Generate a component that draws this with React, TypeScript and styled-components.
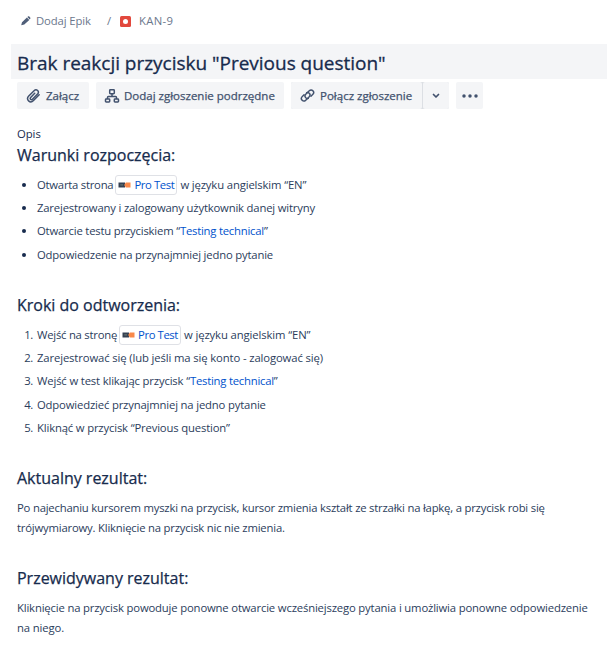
import React from "react";
import styled, { createGlobalStyle } from "styled-components";

const GlobalStyle = createGlobalStyle`
  * { box-sizing: border-box; }
  body {
    margin: 0;
    background: #fff;
    color: #172b4d;
    font: 11.3px/20px "Open Sans", "Noto Sans", sans-serif;
    overflow: hidden;
  }
`;

const Page = styled.main`
  height: 648px;
  overflow: hidden;
`;

const Text = styled.span<{ $track?: number }>`
  letter-spacing: ${(p) => p.$track ?? 0}px;
  white-space: pre;
`;

const Breadcrumbs = styled.nav`
  display: flex;
  align-items: center;
  height: 20px;
  margin: 11px 0 13px 20px;
  color: #6b778c;
`;

const Crumb = styled.div`
  display: flex;
  align-items: center;
`;

const EpicCrumb = styled(Crumb)`
  width: 87px;
  gap: 4px;
`;

const IssueCrumb = styled(Crumb)`
  gap: 8px;
`;

const Slash = styled.span`
  width: 13px;
`;

const BugIcon = styled.span`
  display: grid;
  place-items: center;
  width: 11px;
  height: 11px;
  border-radius: 1.5px;
  background: #e2483d;

  &::after {
    content: "";
    width: 5px;
    height: 5px;
    border-radius: 50%;
    background: #fff;
  }
`;

const Title = styled.h1`
  height: 35px;
  margin: 0 0 3px 11px;
  padding-left: 6px;
  background: #f4f5f7;
  font-size: 19px;
  font-weight: 500;
  line-height: 38px;
  letter-spacing: -0.02px;
  -webkit-text-stroke: 0.3px currentColor;
  white-space: nowrap;
`;

const Toolbar = styled.div`
  display: flex;
  margin-left: 17px;
  gap: 7px;
`;

const Button = styled.button<{ $width: number }>`
  display: flex;
  align-items: center;
  width: ${(p) => p.$width}px;
  height: 27px;
  padding: 0 0 0 8px;
  gap: 4px;
  border: 0;
  border-radius: 2px;
  background: #f4f5f7;
  color: #42526e;
  font: 500 11.5px/27px "Open Sans", "Noto Sans", sans-serif;
  letter-spacing: 0;
  -webkit-text-stroke: 0.25px currentColor;
  white-space: nowrap;
`;

const IconButton = styled(Button)`
  justify-content: center;
  padding: 0;
`;

const SplitButton = styled.div`
  display: flex;
  gap: 1px;
  border-radius: 2px;
  background: #dcdfe4;
`;

const Description = styled.section`
  margin: 15px 17px 0;
`;

const Label = styled.div`
  height: 18px;
  line-height: 19px;
  letter-spacing: -0.05px;
`;

const Block = styled.section<{ $height: number }>`
  height: ${(p) => p.$height}px;
`;

const Heading = styled.h2<{ $gap: number }>`
  height: 26px;
  margin: 0 0 ${(p) => p.$gap}px;
  font-size: 16px;
  font-weight: 500;
  line-height: 26px;
  letter-spacing: -0.01px;
  -webkit-text-stroke: 0.25px currentColor;
`;

const List = styled.div`
  display: grid;
  grid-auto-rows: 23.33px;
  color: #2b3d5c;
`;

const Item = styled.div`
  display: grid;
  grid-template-columns: 16px 1fr;
  column-gap: 4px;
  align-items: center;
`;

const Marker = styled.span`
  text-align: right;
  letter-spacing: -0.3px;
`;

const Bullet = styled.span`
  width: 4px;
  height: 4px;
  margin-left: 5px;
  border-radius: 50%;
  background: #172b4d;
`;

const ItemBody = styled.div`
  display: flex;
  align-items: center;
`;

const Link = styled.a`
  color: #0052cc;
  letter-spacing: -0.23px;
  white-space: nowrap;
`;

const SmartLink = styled.a`
  display: flex;
  align-items: center;
  width: 62px;
  height: 20px;
  margin: 0 3px 0 2px;
  padding-left: 2px;
  gap: 3px;
  border: 1px solid #dfe1e6;
  border-radius: 3px;
  color: #0052cc;
  letter-spacing: -0.39px;
  white-space: nowrap;
`;

const Paragraph = styled.p`
  display: flex;
  flex-direction: column;
  margin: 0;
  color: #2b3d5c;
`;

const PencilIcon = () => (
  <svg width="12" height="12" viewBox="0 0 12 12" fill="#505f79">
    <path d="M1.2 10.3 2 7.3l4.9-4.7 2.4 2.3L4.3 9.6ZM7.4 2.1l.6-.5c.4-.4.9-.4 1.3 0l.9.9c.4.4.4.9 0 1.3l-.5.6Z" />
  </svg>
);

const ClipIcon = () => (
  <svg width="17" height="17" viewBox="0 0 24 24" fill="none" stroke="currentColor" strokeWidth="2.1" strokeLinecap="round">
    <path d="m20 11-8 8.2c-2.1 2.1-5 2.2-6.9.4-1.9-1.9-1.8-4.7.2-6.8l7.5-7.6c1.5-1.5 3.6-1.6 5-.3 1.4 1.4 1.3 3.5-.1 5l-7.2 7.3c-.8.8-1.9.8-2.6.1-.7-.7-.6-1.8.1-2.6l5.7-5.8" />
  </svg>
);

const TreeIcon = () => (
  <svg width="16" height="16" viewBox="0 0 16 16" fill="none" stroke="currentColor" strokeWidth="1.5">
    <rect x="5.7" y="1.7" width="4.6" height="4" rx=".7" />
    <path d="M8 5.7v2.8M3.5 11V9.4q0-.9.9-.9h7.2q.9 0 .9.9V11" />
    <rect x="1.5" y="11.1" width="4.2" height="2.8" rx=".7" />
    <rect x="10.3" y="11.1" width="4.2" height="2.8" rx=".7" />
  </svg>
);

const LinkIcon = () => (
  <svg width="17" height="17" viewBox="0 0 24 24" fill="none" stroke="currentColor" strokeWidth="2" strokeLinecap="round">
    <path d="M13.2 15.9c-1.3.6-2.7.3-3.7-.7-1.4-1.4-1.4-3.5 0-4.9l5-4.9c1.5-1.5 3.7-1.5 5.1-.1 1.4 1.4 1.4 3.6 0 5.1l-2.7 2.7" />
    <path d="M10.8 8.1c1.3-.6 2.7-.3 3.7.7 1.4 1.4 1.4 3.5 0 4.9l-5 4.9c-1.5 1.5-3.7 1.5-5.1.1-1.4-1.4-1.4-3.6 0-5.1l2.7-2.7" />
  </svg>
);

const ChevronIcon = () => (
  <svg width="8" height="6" viewBox="0 0 8 6" fill="none" stroke="currentColor" strokeWidth="1.7" strokeLinecap="round" strokeLinejoin="round">
    <path d="M1.5 1.5 4 4l2.5-2.5" />
  </svg>
);

const MoreIcon = () => (
  <svg width="16" height="4" viewBox="0 0 16 4" fill="currentColor">
    <circle cx="2" cy="2" r="1.75" />
    <circle cx="8" cy="2" r="1.75" />
    <circle cx="14" cy="2" r="1.75" />
  </svg>
);

const SiteIcon = () => (
  <svg width="13" height="8" viewBox="0 0 13 8">
    <path d="M.5 1.5H7v5H.5Z" fill="#344052" />
    <path d="M2.3 3.4h2.8v1H2.3Z" fill="#708078" />
    <path d="m6.2 4 1.6-2.5h4.7v5H7.8Z" fill="#f9894a" />
  </svg>
);

const ProTest = () => (
  <SmartLink>
    <SiteIcon />
    Pro Test
  </SmartLink>
);

const preconditions = [
  <>
    <Text $track={-0.24}>Otwarta strona</Text>
    <ProTest />
    <Text $track={-0.14}>w języku angielskim “EN”</Text>
  </>,
  <Text $track={-0.185}>Zarejestrowany i zalogowany użytkownik danej witryny</Text>,
  <>
    <Text $track={-0.19}>Otwarcie testu przyciskiem “</Text>
    <Link>Testing technical</Link>
    <Text>”</Text>
  </>,
  <Text $track={-0.18}>Odpowiedzenie na przynajmniej jedno pytanie</Text>,
];

const steps = [
  <>
    <Text $track={-0.24}>Wejść na stronę</Text>
    <ProTest />
    <Text $track={-0.12}>w języku angielskim “EN”</Text>
  </>,
  <Text $track={-0.13}>Zarejestrować się (lub jeśli ma się konto - zalogować się)</Text>,
  <>
    <Text $track={-0.16}>Wejść w test klikając przycisk “</Text>
    <Link>Testing technical</Link>
    <Text>”</Text>
  </>,
  <Text $track={-0.17}>Odpowiedzieć przynajmniej na jedno pytanie</Text>,
  <Text $track={-0.165}>Kliknąć w przycisk “Previous question”</Text>,
];

export default function App() {
  return (
    <Page>
      <GlobalStyle />
      <Breadcrumbs>
        <EpicCrumb>
          <PencilIcon />
          <Text $track={-0.1}>Dodaj Epik</Text>
        </EpicCrumb>
        <Slash>/</Slash>
        <IssueCrumb>
          <BugIcon />
          <Text $track={0.3}>KAN-9</Text>
        </IssueCrumb>
      </Breadcrumbs>
      <Title>Brak reakcji przycisku "Previous question"</Title>
      <Toolbar>
        <Button $width={72}>
          <ClipIcon />
          Załącz
        </Button>
        <Button $width={188}>
          <TreeIcon />
          Dodaj zgłoszenie podrzędne
        </Button>
        <SplitButton>
          <Button $width={131}>
            <LinkIcon />
            Połącz zgłoszenie
          </Button>
          <IconButton $width={26}>
            <ChevronIcon />
          </IconButton>
        </SplitButton>
        <IconButton $width={27}>
          <MoreIcon />
        </IconButton>
      </Toolbar>
      <Description>
        <Label>Opis</Label>
        <Block $height={150}>
          <Heading $gap={5}>Warunki rozpoczęcia:</Heading>
          <List>
            {preconditions.map((body, i) => (
              <Item key={i}>
                <Bullet />
                <ItemBody>{body}</ItemBody>
              </Item>
            ))}
          </List>
        </Block>
        <Block $height={173}>
          <Heading $gap={5}>Kroki do odtworzenia:</Heading>
          <List>
            {steps.map((body, i) => (
              <Item key={i}>
                <Marker>{i + 1}.</Marker>
                <ItemBody>{body}</ItemBody>
              </Item>
            ))}
          </List>
        </Block>
        <Block $height={100}>
          <Heading $gap={7}>Aktualny rezultat:</Heading>
          <Paragraph>
            <Text $track={-0.205}>
              Po najechaniu kursorem myszki na przycisk, kursor zmienia kształt ze strzałki na łapkę, a przycisk robi się
            </Text>
            <Text $track={-0.2}>trójwymiarowy. Kliknięcie na przycisk nic nie zmienia.</Text>
          </Paragraph>
        </Block>
        <Block $height={80}>
          <Heading $gap={7}>Przewidywany rezultat:</Heading>
          <Paragraph>
            <Text $track={-0.167}>
              Kliknięcie na przycisk powoduje ponowne otwarcie wcześniejszego pytania i umożliwia ponowne odpowiedzenie
            </Text>
            <Text $track={-0.13}>na niego.</Text>
          </Paragraph>
        </Block>
      </Description>
    </Page>
  );
}
